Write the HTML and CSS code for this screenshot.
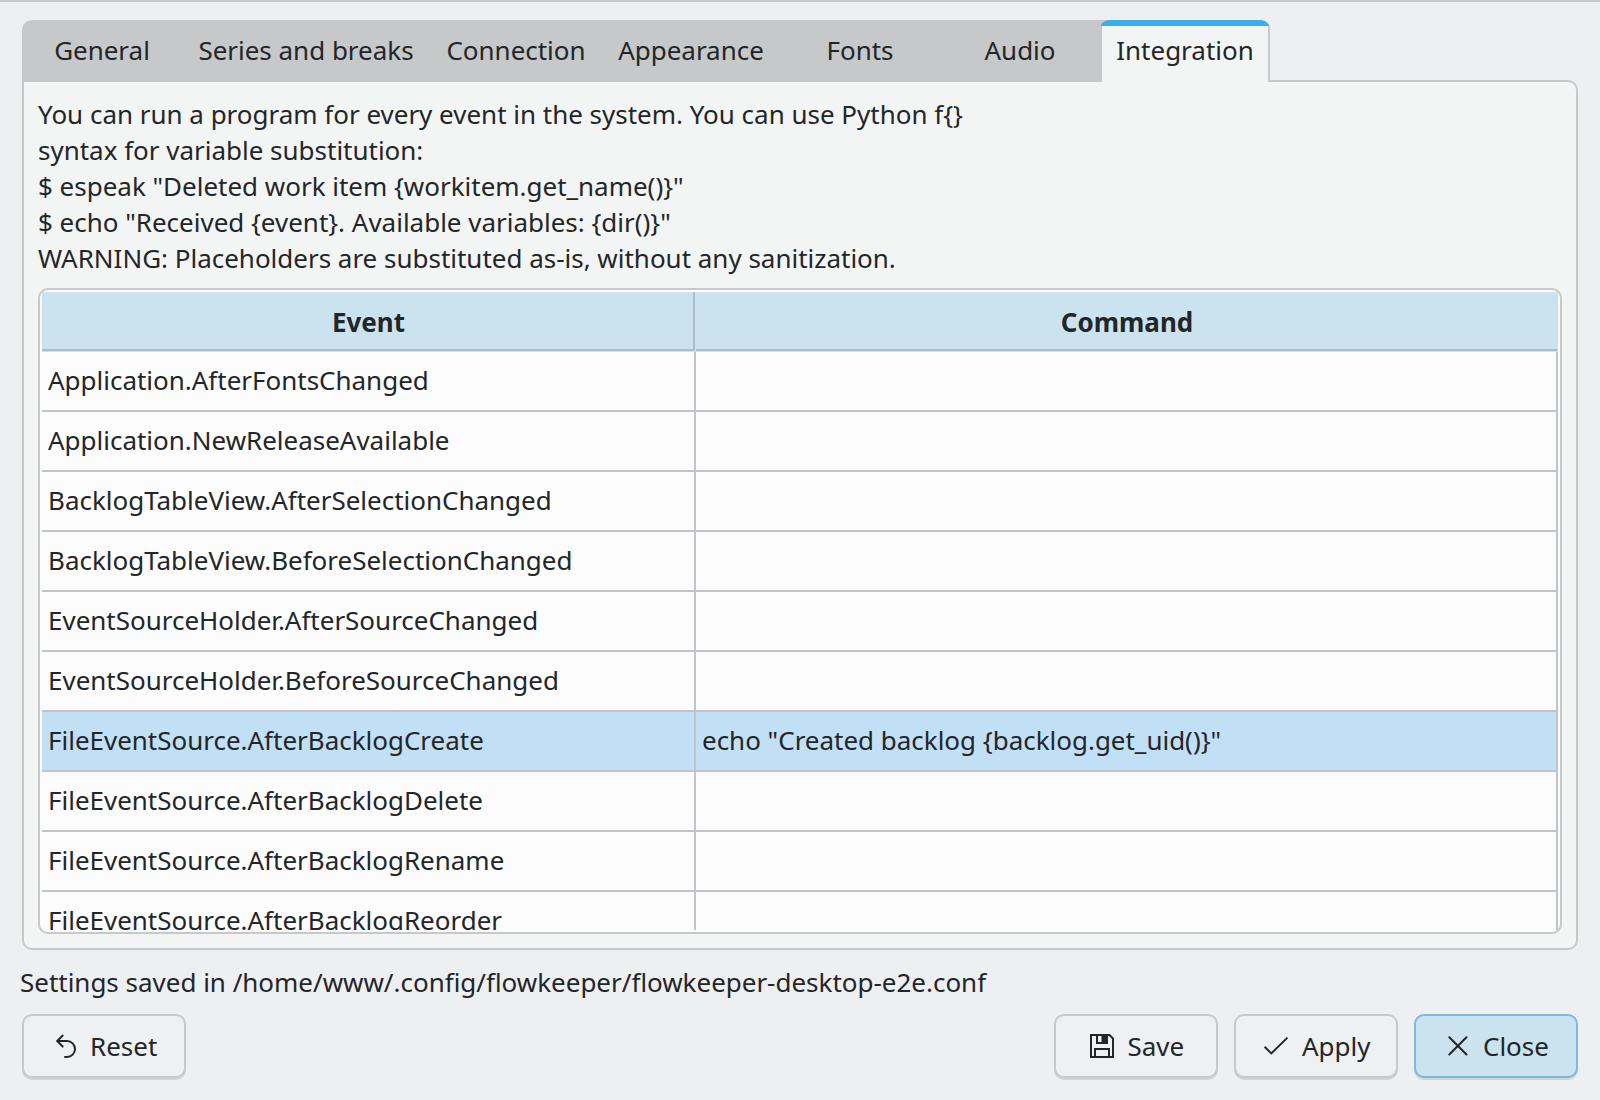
FILE: index.html
```html
<!DOCTYPE html>
<html lang="en">
<head>
<meta charset="utf-8">
<title>Settings</title>
<link rel="stylesheet" href="styles.css">
</head>
<body>
<main class="dialog">
  <nav class="tabs">
    <span class="tab w-general">General</span>
    <span class="tab w-series">Series and breaks</span>
    <span class="tab w-connection">Connection</span>
    <span class="tab w-appearance">Appearance</span>
    <span class="tab">Fonts</span>
    <span class="tab w-audio">Audio</span>
    <span class="tab active">Integration</span>
  </nav>
  <section class="panel">
    <p class="intro">You can run a program for every event in the system. You can use Python f{}<br>syntax for variable substitution:<br>$ espeak "Deleted work item {workitem.get_name()}"<br>$ echo "Received {event}. Available variables: {dir()}"<br>WARNING: Placeholders are substituted as-is, without any sanitization.</p>
    <div class="frame">
      <div class="table">
        <div class="head"><div class="th">Event</div><div class="th">Command</div></div>
        <div class="row"><div>Application.AfterFontsChanged</div><div></div></div>
        <div class="row"><div>Application.NewReleaseAvailable</div><div></div></div>
        <div class="row"><div>BacklogTableView.AfterSelectionChanged</div><div></div></div>
        <div class="row"><div>BacklogTableView.BeforeSelectionChanged</div><div></div></div>
        <div class="row"><div>EventSourceHolder.AfterSourceChanged</div><div></div></div>
        <div class="row"><div>EventSourceHolder.BeforeSourceChanged</div><div></div></div>
        <div class="row selected"><div>FileEventSource.AfterBacklogCreate</div><div>echo "Created backlog {backlog.get_uid()}"</div></div>
        <div class="row"><div>FileEventSource.AfterBacklogDelete</div><div></div></div>
        <div class="row"><div>FileEventSource.AfterBacklogRename</div><div></div></div>
        <div class="row"><div>FileEventSource.AfterBacklogReorder</div><div></div></div>
      </div>
    </div>
  </section>
  <p class="status">Settings saved in /home/www/.config/flowkeeper/flowkeeper-desktop-e2e.conf</p>
  <footer class="buttons">
    <button class="btn reset"><svg class="round" viewBox="0 0 32 32"><path d="M12.7 5.5 7.2 11 12.7 16.5M7.5 11H17A8 8 0 0 1 17 27H15"/></svg>Reset</button>
    <button class="btn save"><svg viewBox="0 0 32 32"><path d="M5 5H23.5L27 8.5V27H5ZM9 27V19H23V27M11 5V13H21V5"/><path class="solid" d="M15.5 5H22V14H15.5Z"/></svg>Save</button>
    <button class="btn"><svg viewBox="0 0 32 32"><path d="M2.6 16.8 9.3 23.4 25.5 7.6"/></svg>Apply</button>
    <button class="btn primary"><svg class="round" viewBox="0 0 32 32"><path d="M7.3 7.3 24.5 24.5M24.5 7.3 7.3 24.5"/></svg>Close</button>
  </footer>
</main>
</body>
</html>
```
FILE: styles.css
```css
* { box-sizing: border-box; }
body {
  margin: 0;
  background: #eeeff1;
  color: #232629;
  font: 25.97px/36px "Noto Sans", sans-serif;
}
p { margin: 0; white-space: nowrap; }
.dialog {
  display: flex;
  flex-direction: column;
  width: 1600px;
  height: 1100px;
  padding: 18px 22px 0;
  border-top: 2px solid #c7c8c9;
  overflow: hidden;
}
.tabs { display: flex; height: 62px; }
.tab {
  width: 160px;
  background: #c7c8ca;
  line-height: 60px;
  text-align: center;
  white-space: nowrap;
}
.w-general { border-radius: 10px 0 0 0; }
.w-series { width: 248px; }
.w-connection { width: 172px; }
.w-appearance { width: 178px; }
/* the bar continues under the rounded corner of the active tab */
.w-audio { box-shadow: 8px 0 0 #c7c8ca; }
.active {
  width: 170px;
  border-radius: 9px 9px 0 0;
  background:
    linear-gradient(#3daee9, #3daee9) top / 100% 6px no-repeat,
    linear-gradient(#c7c8c9, #c7c8c9) left / 2px 100% no-repeat,
    linear-gradient(#c7c8c9, #c7c8c9) right / 2px 100% no-repeat,
    #f3f5f4;
  z-index: 1;
}
.panel {
  height: 870px;
  margin-top: -2px;
  padding: 14px;
  border: 2px solid #c7c8c9;
  border-radius: 0 10px 10px 10px;
  background: #f3f5f4;
}
.intro { height: 192px; }
.frame {
  height: 646px;
  padding: 2px;
  border: 2px solid #c7c8c9;
  border-radius: 10px;
  background: #fcfcfc;
}
.table { height: 638px; overflow: hidden; }
.head, .row { display: grid; grid-template-columns: 654px 1fr; height: 60px; }
.head { background: #cbe3ef; font-weight: bold; text-align: center; line-height: 53px; padding-bottom: 1px; }
.th { padding: 4px 0 0 1px; border-bottom: 2px solid #a9bfcb; }
.th:first-child { padding-left: 2px; border-right: 2px solid #a9bfcb; margin-right: 1px; }
.th:last-child { margin-right: 1px; }
.row > div {
  padding-left: 6px;
  line-height: 56px;
  border: solid #c1c4c9;
  border-width: 0 2px 2px 0;
  white-space: nowrap;
}
.selected { background: #c1dff5; }
.status { margin: 14px 0 0 -2px; height: 36px; }
.buttons { display: flex; gap: 16px; margin-top: 14px; }
.btn {
  display: flex;
  align-items: center;
  gap: 8px;
  width: 164px;
  height: 64px;
  padding: 0 0 0 26px;
  border: 2px solid #c7c8c9;
  border-radius: 10px;
  background: #eff0f2;
  box-shadow: 0 2px 0 #d2d3d5;
  color: inherit;
  font: inherit;
}
.reset { margin-right: auto; }
.save { padding-left: 30px; gap: 9.5px; }
.primary { background: #cbe3ef; border-color: #7db9dc; gap: 9px; }
.btn svg { width: 32px; height: 32px; fill: none; stroke: #232629; stroke-width: 2; }
.btn .round { stroke-linecap: round; }
.btn .solid { fill: #232629; stroke: none; }
```
